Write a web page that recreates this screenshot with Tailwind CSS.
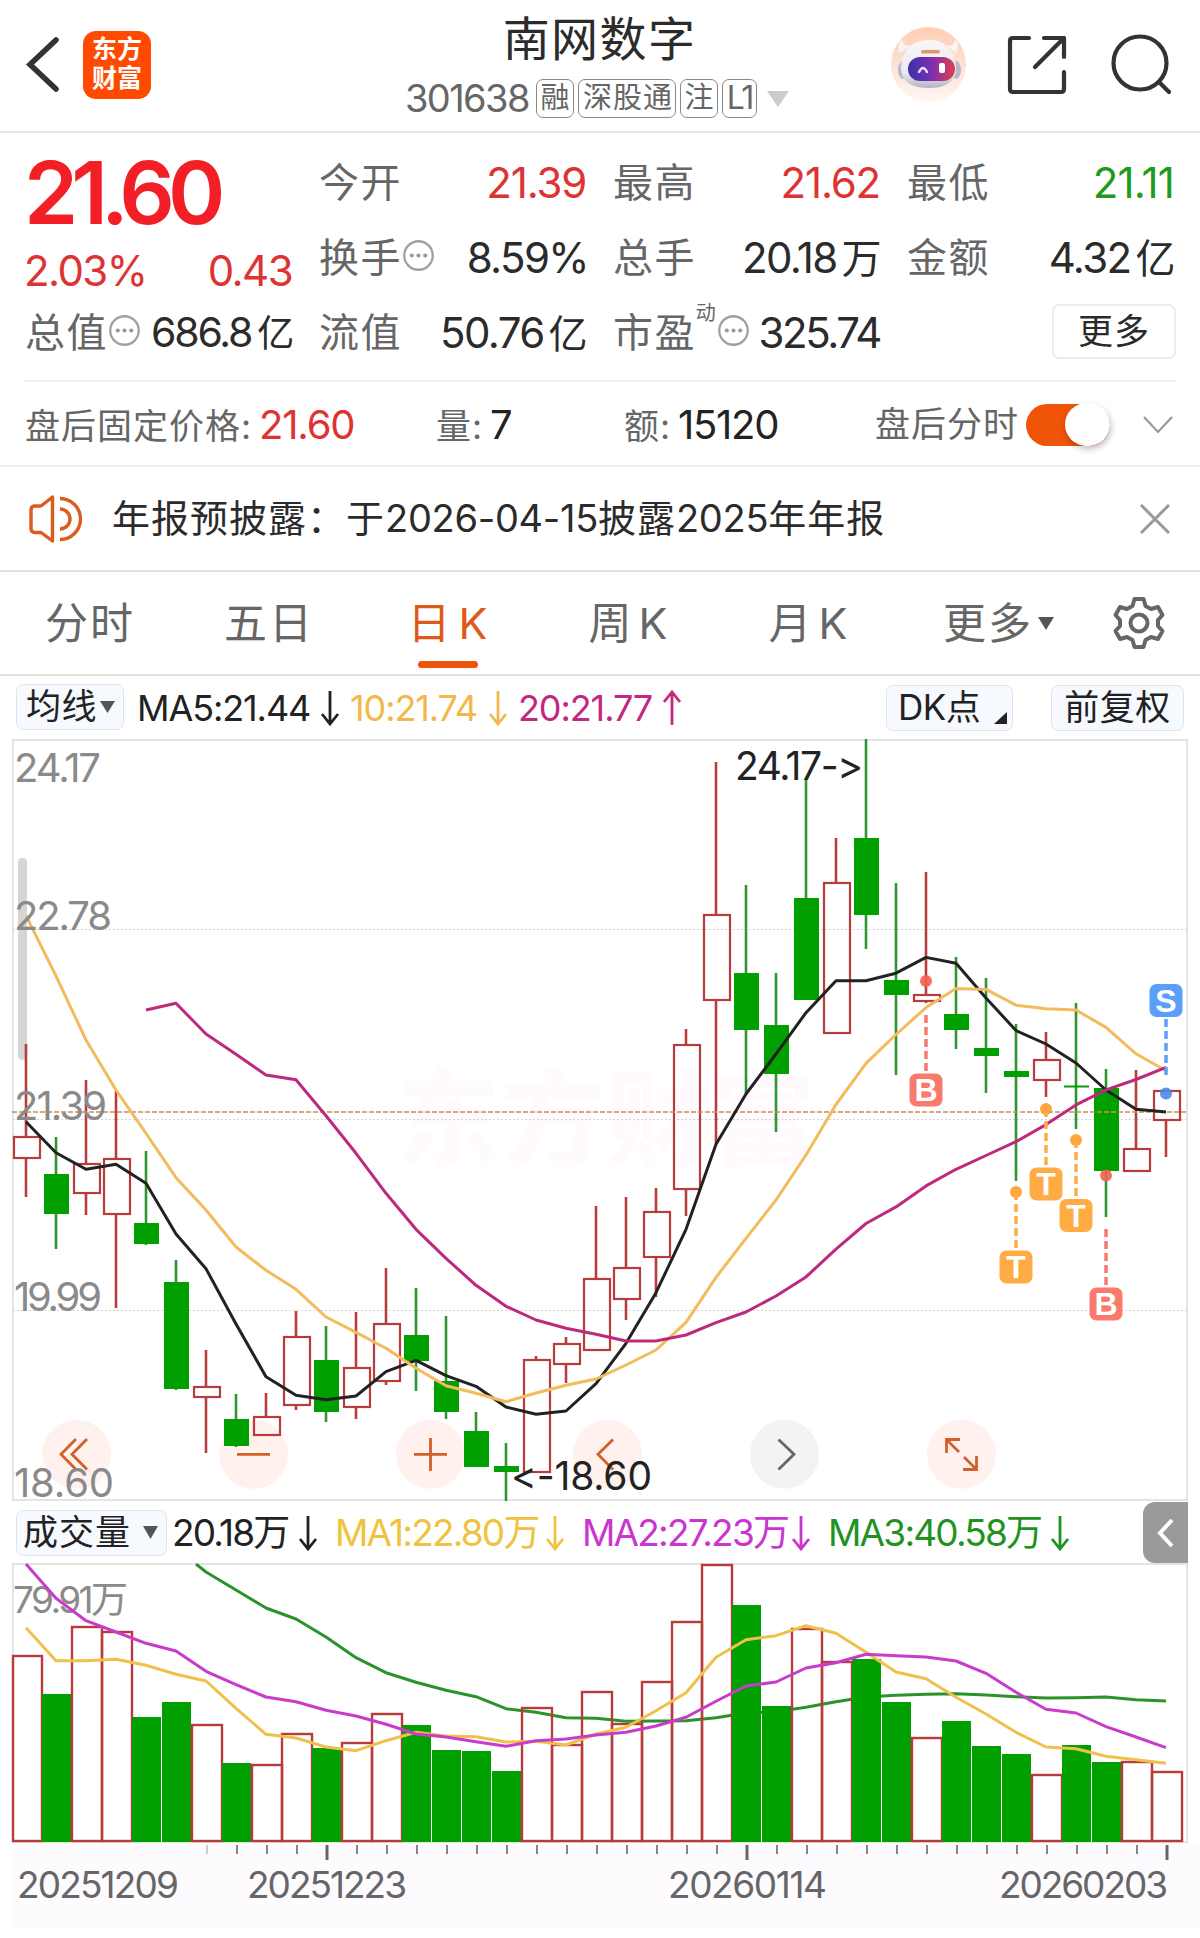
<!DOCTYPE html>
<html lang="zh-CN">
<head>
    <meta charset="UTF-8">
    <meta name="viewport" content="width=device-width, initial-scale=1.0">
    <title>南网数字 301638</title>
    <script src="https://cdn.jsdelivr.net/npm/@tailwindcss/browser@4"></script>
</head>
<body class="bg-white w-[1200px] h-[1938px] overflow-hidden text-[#2b2b2b] font-['Inter','Noto_Sans_CJK_SC',sans-serif] whitespace-nowrap">
    <svg class="hidden">
        <symbol id="info" viewBox="0 0 30 30">
            <circle cx="15" cy="15" r="13.8" fill="none" stroke="#a0a0a0" stroke-width="2.2"/>
            <circle cx="8.5" cy="15" r="2" fill="#999"/><circle cx="15" cy="15" r="2" fill="#999"/><circle cx="21.5" cy="15" r="2" fill="#999"/>
        </symbol>
        <symbol id="arrow" viewBox="0 0 20 36">
            <path d="M10 1V33M2 24L10 34L18 24" fill="none" stroke="currentColor" stroke-width="2.8"/>
        </symbol>
    </svg>

    <!-- Header -->
    <header class="h-[133px] border-b-2 border-[#e6e6e6] flex items-start">
        <svg class="w-[83px] h-[131px] shrink-0" viewBox="0 0 83 131"><path d="M56 40L30 64.5L56 89" fill="none" stroke="#333" stroke-width="5.5" stroke-linecap="round"/></svg>
        <div class="mt-[31px] w-[68px] h-[68px] shrink-0 rounded-[13px] bg-[#ff4a00] text-white font-bold text-[25px] leading-[29px] text-center pt-[4px]">东方<br>财富</div>
        <div class="ml-[254px] w-[385px] shrink-0">
            <h1 class="mt-[7px] text-[47px] leading-[64px] tracking-[1.4px] text-center pl-[4px]">南网数字</h1>
            <div class="mt-[8px] flex items-center text-[#666] h-[39px]">
                <span class="text-[38px] tracking-[-1.6px] w-[131px]">301638</span>
                <span class="h-[39px] w-[38px] border-[1.5px] border-[#888] rounded-[7px] text-[29px] leading-[35px] text-center mr-[4px]">融</span>
                <span class="h-[39px] w-[98px] border-[1.5px] border-[#888] rounded-[7px] text-[29px] leading-[35px] tracking-[1px] pl-[4px] mr-[4px]">深股通</span>
                <span class="h-[39px] w-[38px] border-[1.5px] border-[#888] rounded-[7px] text-[29px] leading-[35px] text-center mr-[4px]">注</span>
                <span class="h-[39px] w-[35px] border-[1.5px] border-[#888] rounded-[7px] text-[32px] leading-[35px] tracking-[-2px] text-center mr-[10px]">L1</span>
                <svg class="w-[22px] h-[16px]" viewBox="0 0 22 16"><path d="M0 0H22L11 16Z" fill="#ccc"/></svg>
            </div>
        </div>
        <svg class="mt-[27px] ml-[101px] w-[75px] h-[75px] shrink-0" viewBox="0 0 75 75">
            <defs>
                <linearGradient id="halo" x1="0" y1="0" x2="0" y2="1"><stop offset="0" stop-color="#ffcdb2"/><stop offset=".75" stop-color="#fdebe4"/><stop offset="1" stop-color="#fff8f4"/></linearGradient>
                <linearGradient id="visor"><stop offset="0" stop-color="#3a32a8"/><stop offset=".5" stop-color="#7c2fb0"/><stop offset="1" stop-color="#e0404e"/></linearGradient>
                <linearGradient id="helmet" x1="0" y1="0" x2="0" y2="1"><stop offset="0" stop-color="#fbf6f6"/><stop offset=".7" stop-color="#e9e8ef"/><stop offset="1" stop-color="#b5b3c0"/></linearGradient>
            </defs>
            <circle cx="37.5" cy="37.5" r="37.5" fill="url(#halo)"/>
            <ellipse cx="12" cy="43" rx="5" ry="9" fill="#bab9c8"/><ellipse cx="65" cy="43" rx="5" ry="9" fill="#bab9c8"/>
            <path d="M9 26C6 20 8 14 11 13C12 18 16 20 21 18ZM65 26C68 20 67 14 64 13C63 18 59 20 54 18Z" fill="#f7f5f8"/>
            <path d="M11 34C14 20 24 13 38 13S61 20 64 34C68 50 60 61 38 61S7 50 11 34Z" fill="url(#helmet)"/>
            <rect x="30" y="23" width="19" height="3.5" rx="1.7" fill="#d99a6c"/>
            <rect x="17" y="30" width="47" height="24" rx="12" fill="url(#visor)"/>
            <path d="M28 45Q32 37 36 45" fill="none" stroke="#e6dcff" stroke-width="2.5" stroke-linecap="round"/>
            <rect x="48" y="36" width="6" height="10" rx="2" fill="#fff"/>
        </svg>
        <svg class="mt-[34px] ml-[40px] w-[62px] h-[62px] shrink-0" viewBox="0 0 62 62" fill="none" stroke="#333" stroke-width="4.2" stroke-linecap="round" stroke-linejoin="round">
            <path d="M23 4H7Q4 4 4 7V55Q4 58 7 58H55Q58 58 58 55V38"/><path d="M38 4H58V23M58 4L29 33"/>
        </svg>
        <svg class="mt-[32px] ml-[41px] w-[66px] h-[66px] shrink-0" viewBox="0 0 66 66" fill="none" stroke="#333" stroke-width="4.2" stroke-linecap="round"><circle cx="31" cy="31" r="26.5"/><path d="M50 50L60 60"/></svg>
    </header>

    <!-- Quote -->
    <section class="relative h-[249px] pt-[12px] pl-[25px] grid grid-cols-[267px_267px_267px_267px] grid-rows-[75px_75px_75px] gap-x-[27px] content-start text-[42px] text-[#2b2b2b] tracking-[-1.6px]">
        <div class="row-span-2">
            <div class="h-[95px] -ml-[1px] text-[87px] leading-[96px] font-semibold text-[#f21f26] tracking-[-7px]">21.60</div>
            <div class="h-[60px] -ml-[1px] flex justify-between items-center text-[#dd3333]"><span>2.03%</span><span>0.43</span></div>
        </div>
        <div class="flex items-center justify-between"><span class="text-[40px] text-[#666] tracking-[1.4px]">今开</span><span class="text-[#dd3333] tracking-[-1.2px]">21.39</span></div>
        <div class="flex items-center justify-between"><span class="text-[40px] text-[#666] tracking-[1.4px]">最高</span><span class="text-[#dd3333] tracking-[-1.2px]">21.62</span></div>
        <div class="flex items-center justify-between"><span class="text-[40px] text-[#666] tracking-[1.4px]">最低</span><span class="text-[#1e9a1e] tracking-[-0.8px]">21.11</span></div>
        <div class="flex items-center"><span class="text-[40px] text-[#666] tracking-[1.4px]">换手</span><svg class="w-[31px] h-[31px] ml-px -mt-[5px]"><use href="#info"/></svg><span class="ml-auto -mr-[2px]">8.59%</span></div>
        <div class="flex items-center justify-between"><span class="text-[40px] text-[#666] tracking-[1.4px]">总手</span><span>20.18<span class="text-[40px] ml-[5px]">万</span></span></div>
        <div class="flex items-center justify-between"><span class="text-[40px] text-[#666] tracking-[1.4px]">金额</span><span>4.32<span class="text-[40px] ml-[5px]">亿</span></span></div>
        <div class="flex items-center"><span class="text-[40px] text-[#666] tracking-[1.4px]">总值</span><svg class="w-[31px] h-[31px] ml-px -mt-[5px]"><use href="#info"/></svg><span class="ml-auto tracking-[-2.2px] text-[41px]">686.8<span class="text-[37px] ml-[6px]">亿</span></span></div>
        <div class="flex items-center justify-between"><span class="text-[40px] text-[#666] tracking-[1.4px]">流值</span><span>50.76<span class="text-[39px] ml-[5px]">亿</span></span></div>
        <div class="flex items-center"><span class="text-[40px] text-[#666] tracking-[1.4px]">市盈</span><span class="text-[20px] text-[#666] tracking-normal -mt-[39px]">动</span><svg class="w-[31px] h-[31px] ml-[2px] -mt-[5px]"><use href="#info"/></svg><span class="ml-auto tracking-[-2.4px]">325.74</span></div>
        <div class="flex items-center justify-end"><span class="w-[124px] h-[55px] -mr-[2px] -mt-[3px] rounded-[7px] border-2 border-[#ebebf0] text-[35px] leading-[50px] text-center tracking-[1px]">更多</span></div>
        <div class="absolute left-[24px] right-[24px] bottom-0 h-[2px] bg-[#f0f0f0]"></div>
    </section>

    <!-- After-hours fixed price -->
    <section class="h-[85px] border-b-2 border-[#f0f0f0] flex items-center pt-[2px] pl-[25px] text-[35px] text-[#666] tracking-[1px]">
        <div class="w-[411px]">盘后固定价格:<span class="ml-[7px] text-[40px] text-[#dd3333] tracking-[-1.2px]">21.60</span></div>
        <div class="w-[188px]">量:<span class="ml-[7px] text-[40px] text-[#222] tracking-[-1.2px]">7</span></div>
        <div class="w-[251px]">额:<span class="ml-[7px] text-[40px] text-[#222] tracking-[-1.3px]">15120</span></div>
        <div class="w-[151px]">盘后分时</div>
        <div class="w-[84px] h-[42px] rounded-full bg-[#f05409] flex justify-end items-center"><div class="w-[45px] h-[43px] rounded-full bg-white shadow-[1px_3px_6px_rgba(0,0,0,0.25)]"></div></div>
        <svg class="ml-[33px] w-[30px] h-[18px]" viewBox="0 0 30 18"><path d="M1 1L15 16L29 1" fill="none" stroke="#999" stroke-width="2.2"/></svg>
    </section>

    <!-- Notice -->
    <section class="h-[105px] border-b-2 border-[#e2e2e2] flex items-center pl-[28px] text-[38px] tracking-[1px]">
        <svg class="w-[54px] h-[50px]" viewBox="0 -2 54 50" fill="none" stroke="#dd5b1c" stroke-width="3.4" stroke-linejoin="round">
            <path d="M3 14Q3 10 7 10H13L24.500 1V45L13 36.500H7Q3 36.500 3 32.500Z"/><path d="M32 13A10 10 0 0 1 32 33M32 2.500A20.500 20.500 0 0 1 32 43.500"/>
        </svg>
        <span class="ml-[30px]">年报预披露：于<span class="tracking-[-0.3px]">2026-04-15</span>披露<span class="tracking-[-0.3px]">2025</span>年年报</span>
        <svg class="ml-auto mr-[30px] w-[30px] h-[30px]" viewBox="0 0 30 30"><path d="M1 1L29 29M29 1L1 29" stroke="#999" stroke-width="3"/></svg>
    </section>

    <!-- Period tabs -->
    <nav class="h-[104px] border-b-2 border-[#e2e2e2] flex items-center text-[43px] text-[#666] tracking-[2px]">
        <div class="w-[180px] text-center">分时</div>
        <div class="w-[178px] text-center">五日</div>
        <div class="w-[181px] relative text-center text-[#e0591a]">日<span class="ml-[6px]">K</span><div class="absolute left-[60px] -bottom-[13px] w-[60px] h-[7px] rounded-full bg-[#f05409]"></div></div>
        <div class="w-[180px] text-center">周<span class="ml-[5px]">K</span></div>
        <div class="w-[180px] text-center">月<span class="ml-[5px]">K</span></div>
        <div class="w-[190px] flex items-center pl-[44px]">更多<svg class="ml-[5px] w-[16px] h-[13px]" viewBox="0 0 16 13"><path d="M0 0H16L8 13Z" fill="#555"/></svg></div>
        <svg class="ml-[23px] w-[54px] h-[54px]" viewBox="0 0 54 54" fill="none" stroke="#666" stroke-width="4" stroke-linejoin="round">
            <path d="M22.500 3H31.500L33.500 10L39 13L46 11L50.500 19L46 24V30L50.500 35L46 43L39 41L33.500 44L31.500 51H22.500L20.500 44L15 41L8 43L3.500 35L8 30V24L3.500 19L8 11L15 13L20.500 10Z"/>
            <circle cx="27" cy="27" r="8.500"/>
        </svg>
    </nav>

    <!-- Moving averages -->
    <section class="h-[63px] flex items-center pl-[16px] text-[36px] text-[#222] tracking-[-1.100px]">
        <div class="w-[108px] h-[46px] mt-[-2px] rounded-[7px] border-[1.5px] border-[#e0e3ee] bg-[#f6faff] flex items-center pl-[9px] text-[35px] tracking-[0.5px]">均线<svg class="ml-[3px] w-[15px] h-[12px]" viewBox="0 0 15 12"><path d="M0 0H15L7.500 12Z" fill="#555"/></svg></div>
        <div class="ml-[13px] w-[213px] flex items-center">MA5:21.44<svg class="ml-auto mr-[10px] w-[20px] h-[36px]"><use href="#arrow"/></svg></div>
        <div class="w-[168px] flex items-center text-[#f3b84c]">10:21.74<svg class="ml-auto mr-[10px] w-[20px] h-[36px]"><use href="#arrow"/></svg></div>
        <div class="w-[164px] flex items-center text-[#c3277f]">20:21.77<svg class="ml-auto w-[20px] h-[36px] rotate-180"><use href="#arrow"/></svg></div>
        <div class="ml-[204px] w-[127px] h-[46px] rounded-[7px] border-[1.5px] border-[#e0e3ee] bg-[#f6faff] flex items-center pl-[11px] text-[35px] tracking-[-0.5px]">DK点<svg class="ml-auto mr-[5px] mt-[21px] w-[13px] h-[12px]" viewBox="0 0 13 12"><path d="M13 0V12H0Z" fill="#222"/></svg></div>
        <div class="ml-[38px] w-[133px] h-[46px] rounded-[7px] border-[1.5px] border-[#e0e3ee] bg-[#f6faff] text-[35px] leading-[42px] text-center tracking-[0.5px]">前复权</div>
    </section>

    <!-- Candles -->
    <svg id="kline" class="block w-[1200px] h-[763px] overflow-visible [font-feature-settings:'calt'_0]" viewBox="0 739 1200 763" font-family="Inter, 'Noto Sans CJK SC', sans-serif"></svg>

    <!-- Volume header -->
    <section class="h-[61px] flex items-center pl-[16px] text-[37px] text-[#222] tracking-[-1.800px]">
        <div class="w-[151px] h-[46px] rounded-[7px] border-[1.5px] border-[#e0e3ee] bg-[#f6faff] flex items-center pl-[6px] text-[35px] tracking-[1px]">成交量<svg class="ml-auto mr-[8px] w-[15px] h-[13px]" viewBox="0 0 15 13"><path d="M0 0H15L7.500 13Z" fill="#555"/></svg></div>
        <div class="ml-[5px] w-[146px] flex items-center">20.18万<svg class="ml-auto w-[20px] h-[36px]"><use href="#arrow"/></svg></div>
        <div class="ml-[17px] w-[230px] flex items-center text-[#f0c240]">MA1:22.80万<svg class="ml-auto w-[20px] h-[36px]"><use href="#arrow"/></svg></div>
        <div class="ml-[17px] w-[229px] flex items-center text-[#cb35cf]">MA2:27.23万<svg class="ml-auto w-[20px] h-[36px]"><use href="#arrow"/></svg></div>
        <div class="ml-[17px] w-[242px] flex items-center text-[#1f931f]">MA3:40.58万<svg class="ml-auto w-[20px] h-[36px]"><use href="#arrow"/></svg></div>
        <div class="ml-[73px] w-[45px] h-[61px] rounded-l-[12px] bg-[#9c999c] flex items-center justify-center">
            <svg class="w-[18px] h-[30px]" viewBox="0 0 18 30"><path d="M15 2L3 15L15 28" fill="none" stroke="#fff" stroke-width="4"/></svg>
        </div>
    </section>

    <!-- Volume bars and date axis -->
    <svg id="volume" class="block w-[1200px] h-[375px]" viewBox="0 1563 1200 375" font-family="Inter, 'Noto Sans CJK SC', sans-serif"></svg>

    <script>
        const RED = '#b93c3c', GREEN = '#00a000', WICK = '#2f962f';
        const cx = i => 26 + i * 30;

        // direction, high, body top, body bottom, low
        const candles = [
            ['r',1044,1137,1158,1197],['g',1137,1174,1214,1249],['r',1080,1164,1193,1215],['r',1091,1159,1214,1308],
            ['g',1151,1223,1244,1245],['g',1260,1282,1389,1390],['r',1350,1387,1397,1453],['g',1394,1419,1446,1447],
            ['r',1393,1417,1435,1435],['r',1311,1337,1405,1410],['g',1326,1360,1412,1422],['r',1312,1368,1407,1419],
            ['r',1268,1324,1381,1385],['g',1288,1335,1361,1391],['g',1316,1381,1412,1419],['g',1412,1431,1467,1467],
            ['g',1443,1466,1472,1501],['r',1356,1360,1472,1472],['r',1337,1344,1364,1383],['r',1206,1279,1350,1351],
            ['r',1197,1268,1299,1320],['r',1188,1212,1257,1297],['r',1029,1045,1189,1216],['r',762,915,1000,1144],
            ['g',885,973,1030,1094],['g',973,1025,1074,1132],['g',778,898,1000,1000],['r',838,883,1033,1033],
            ['g',739,838,915,949],['g',883,980,995,1075],['r',872,995,1001,1003],['g',957,1014,1030,1049],
            ['g',978,1048,1056,1093],['g',1024,1071,1077,1181],['r',1032,1060,1080,1097],['g',1003,1085.500,1087.500,1129],
            ['g',1069,1088,1171,1217],['r',1070,1149,1171,1171],['r',1091,1091,1120,1157]
        ];
        const ma5 = [1121.7,1152.7,1169.3,1164.3,1183.3,1234,1268.7,1324,1376.7,1395.3,1399.7,1396,1371.7,1360.3,1375.7,1386.3,1407,1414.3,1411,1383.7,1343.3,1292.7,1229.3,1144.3,1094,1054,1012.7,980.7,980.7,973.2,957.4,963.3,998,1030.5,1044,1063,1090,1109.2,1112];
        const ma10 = [915.7,976,1040,1090,1133.3,1177.7,1210,1247,1270.3,1289.3,1317,1332.3,1348.3,1368.3,1385.7,1393.3,1401.7,1393,1385.3,1379,1365,1350,1322.3,1277.3,1238.3,1200,1155,1104.5,1063.3,1034.5,1007.6,988.6,989.4,1005.2,1008.8,1010,1027.4,1053.8,1070.8];
        const ma20 = [1010,1003.3,1034,1054.3,1075,1079.7,1115.7,1153.3,1193.3,1229.3,1258.3,1285.3,1306.3,1320,1328.3,1334.3,1341,1341,1335,1322.7,1312,1296,1276.9,1249.2,1223.5,1206.9,1185.9,1169.3,1155.5,1141.6,1124.6,1104.9,1089.8,1079.5,1067.3];
        const volTop = [1656,1694,1627,1632,1717,1702,1725,1763,1765,1734,1748,1743,1714,1725,1750,1751,1771,1708,1745,1692,1724,1682,1622,1565,1605,1706,1629,1662,1659,1702,1738,1721,1746,1754,1775,1745,1762,1762,1772];
        const vol1 = [1627.7,1660.7,1660.7,1659.3,1665.3,1674.3,1681,1708.3,1734.3,1738,1747,1750.7,1740.7,1732.3,1736,1736.7,1742,1741.3,1745,1734,1727.3,1710.7,1692.7,1657.3,1639.7,1635.7,1625.7,1633.3,1652.3,1672,1678.7,1697.3,1714,1732.3,1747,1748.7,1756.3,1759.7,1763.3];
        const vol2 = [1564,1598.3,1620.7,1632,1643.3,1651,1671.3,1684.7,1697,1701.7,1710.3,1716,1724.3,1734,1737,1741.7,1746.3,1740.7,1739,1735,1732.3,1726,1717.3,1701.3,1686,1682,1668,1662.7,1654.3,1655.7,1657,1661,1673.3,1692.3,1709.3,1713,1726.7,1737,1747.7];
        const vol3 = [1572,1590,1608,1619,1637,1657.7,1672.7,1682.3,1690.3,1696.7,1708.7,1712.3,1717.7,1718.3,1721.3,1721,1720.7,1717.7,1713,1711.7,1707.3,1701.7,1697,1695.3,1694.3,1693.7,1695,1696.7,1698,1697.7,1697,1699.7,1701];

        const line = (data, color, start = 0, lead = '') =>
            `<polyline points="${lead} ${data.map((y, i) => cx(i + start) + ',' + y).join(' ')}" fill="none" stroke="${color}" stroke-width="3" stroke-linejoin="round"/>`;
        const label = (text, x, y, w, size = 39, color = '#8a8a8a') =>
            `<text x="${x}" y="${y}" textLength="${w}" font-size="${size}" fill="${color}">${text}</text>`;

        function drawCandle([dir, high, top, bottom, low], i) {
            const x = cx(i);
            if (dir === 'g') {
                return `<path d="M${x} ${high}V${low}" stroke="${WICK}" stroke-width="2.600"/><rect x="${x - 12}" y="${top}" width="25" height="${bottom - top}" fill="${GREEN}"/>`;
            }
            return `<path d="M${x} ${high}V${top}M${x} ${bottom}V${low}" stroke="${RED}" stroke-width="2.600"/><rect x="${x - 12}" y="${top}" width="26" height="${bottom - top}" fill="none" stroke="${RED}" stroke-width="2.200"/>`;
        }

        // letter, candle index, dot y, dash start, dash end, badge center y
        const marks = [
            ['B',30,981,1015,1071,1090],['T',33,1192,1192,1249,1267],['T',34,1109,1109,1166,1184],
            ['T',35,1140,1140,1197,1215.500],['B',36,1175.600,1229,1286,1304],['S',38,1093.500,1019,1075,1000.500]
        ];
        const markColor = { B: ['#fa7a6e', '#f4604f'], T: ['#ffac45', '#ff9d28'], S: ['#5c9ffa', '#4c86ea'] };
        const drawMark = ([t, i, dot, d1, d2, y]) => {
            const x = cx(i), [fill, dark] = markColor[t];
            return `<circle cx="${x}" cy="${dot}" r="6" fill="${dark}" fill-opacity=".9"/>
                <path d="M${x} ${d1}V${d2}" stroke="${fill}" stroke-width="3.500" stroke-dasharray="8 4"/>
                <rect x="${x - 16.500}" y="${y - 16.500}" width="33" height="33" rx="7" fill="${fill}"/>
                <text x="${x}" y="${y + 11}" text-anchor="middle" font-family="Liberation Sans, sans-serif" font-weight="bold" font-size="32" fill="#fff">${t}</text>`;
        };

        const toolIcons = [
            ['M76 1439L61 1454.300L76 1469.500M87 1439L72 1454.300L87 1469.500', 76.5],
            ['M237 1454.300H270', 253.5],
            ['M414 1454.300H447M430.500 1438V1471', 430.5],
            ['M613 1439.500L598 1454.300L613 1469.500', 607.5],
            ['M778.500 1439.500L794 1454.300L778.500 1469.500', 784.5],
            ['M946.500 1453V1439.500H960M946.500 1439.500L959 1452M976.500 1456V1469.500H963M976.500 1469.500L964 1457', 961.5]
        ];
        const drawTool = ([d, x]) => {
            const off = x === 784.5;
            return `<circle cx="${x}" cy="1454.300" r="34.500" fill="${off ? '#8c6ea0' : '#ff6432'}" fill-opacity=".09"/><path d="${d}" fill="none" stroke="${off ? '#666' : '#d2602a'}" stroke-width="2.800"/>`;
        };

        document.getElementById('kline').innerHTML = `
            <text x="396" y="1158" textLength="420" font-size="104" font-weight="900" fill="#fefafe">东方财富</text>
            <path d="M13 740H1187V1500H13Z" fill="none" stroke="#e4e4e4" stroke-width="2"/>
            <path d="M13 929.500H1186M13 1119.500H1186M13 1310.500H1186" stroke="#d2d2d2" stroke-dasharray="2 2"/>
            <rect x="18" y="858" width="9" height="202" rx="4.500" fill="#d5d5d5"/>
            ${toolIcons.map(drawTool).join('')}
            ${candles.map(drawCandle).join('')}
            <path d="M12 1112H1186" stroke="#d08a55" stroke-width="1.600" stroke-dasharray="5 2"/>
            ${line(ma5, '#222')}${line(ma10, '#f3bb5c')}${line(ma20, '#bd2a7c', 4)}
            ${marks.map(drawMark).join('')}
            ${label('24.17', 14, 782, 87, 40)}${label('22.78', 14, 930, 98, 40)}${label('21.39', 14, 1120, 93, 40)}
            ${label('19.99', 14, 1311, 88, 40)}${label('18.60', 14, 1497, 100, 40)}
            ${label('24.17-&gt;', 735, 780, 128, 39, '#222')}${label('&lt;-18.60', 511, 1490, 141, 39, '#222')}`;

        const bar = (top, i) => candles[i][0] === 'g' && i !== 26
            ? `<rect x="${cx(i) - 14}" y="${top}" width="29" height="${1842 - top}" fill="${GREEN}"/>`
            : `<rect x="${cx(i) - (i ? 14 : 13)}" y="${top}" width="${i ? 30 : 29}" height="${1841 - top}" fill="none" stroke="${RED}" stroke-width="2.400"/>`;
        const ticks = candles.map((c, i) => i < 6 ? '' : i % 14 === 10
            ? `<path d="M${cx(i) + 1} 1845V1860" stroke="#666" stroke-width="3"/>`
            : `<path d="M${cx(i) + 1} 1845V1854" stroke="${i === 6 ? '#ccc' : '#888'}" stroke-width="2"/>`).join('');

        document.getElementById('volume').innerHTML = `
            <rect x="12" y="1843" width="1188" height="86" fill="#fefbff"/>
            <path d="M13 1564H1187V1842H13Z" fill="none" stroke="#e4e4e4" stroke-width="2"/>
            ${label('79.91万', 13, 1613, 115, 37)}
            ${line(vol3, '#2b932b', 6, '196,1564')}
            ${volTop.map(bar).join('')}
            ${line(vol1, '#f0c04a')}${line(vol2, '#c93ccb')}
            ${ticks}
            ${label('20251209', 17, 1898, 162, 37, '#666')}${label('20251223', 247, 1898, 160, 37, '#666')}
            ${label('20260114', 668, 1898, 159, 37, '#666')}${label('20260203', 999, 1898, 169, 37, '#666')}`;
    </script>
</body>
</html>
